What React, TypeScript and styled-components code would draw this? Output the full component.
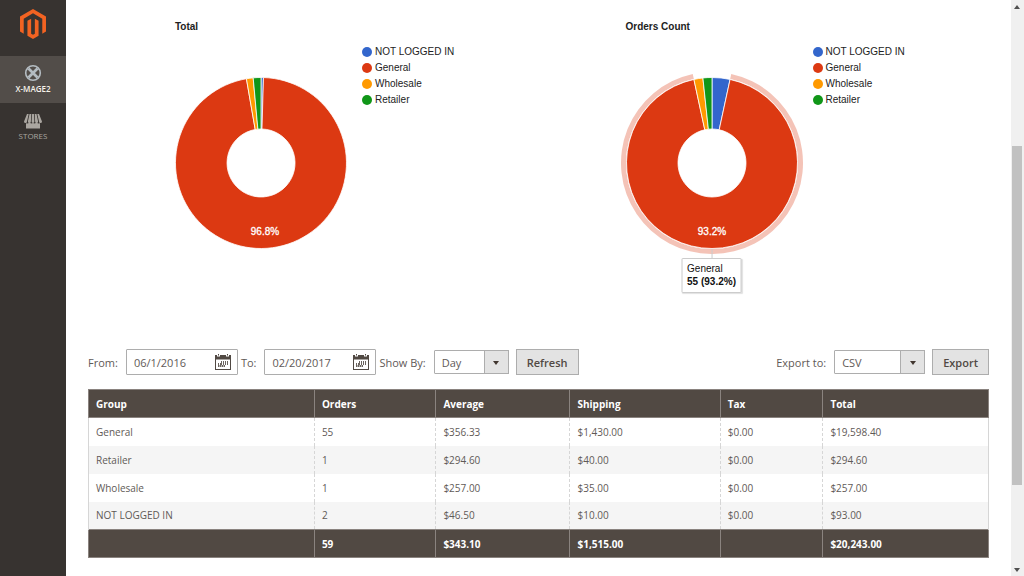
import React from "react";
import styled, { createGlobalStyle } from "styled-components";

const GlobalStyle = createGlobalStyle`
  *, *::before, *::after { box-sizing: border-box; }
  body {
    margin: 0;
    background: #fff;
    color: #5f5a57;
    font-family: "Open Sans", "Noto Sans", sans-serif;
    font-size: 11px;
  }
`;

const Page = styled.div`
  display: grid;
  grid-template-columns: 66px minmax(0, 1fr) 13px;
  min-height: 100vh;
`;

const Sidebar = styled.nav`
  background: #373330;
`;

const LogoLink = styled.a`
  display: flex;
  justify-content: center;
  height: 56px;
  padding-top: 9px;
  color: #f26322;
`;

const MenuList = styled.ul`
  margin: 0;
  padding: 0;
  list-style: none;
`;

const MenuLink = styled.a<{ $active?: boolean }>`
  display: flex;
  flex-direction: column;
  align-items: center;
  gap: 1px;
  height: 47px;
  padding-top: 8px;
  background: ${(p) => (p.$active ? "#524d49" : "transparent")};
  color: ${(p) => (p.$active ? "#f7f3eb" : "#aaa6a0")};
  font-size: 8px;
  line-height: 12px;
  font-weight: ${(p) => (p.$active ? 600 : 400)};
  text-decoration: none;
  text-transform: uppercase;
`;

const Main = styled.main`
  padding: 18px 22px;
`;

const Charts = styled.section`
  display: grid;
  grid-template-columns: 1fr 1fr;
  height: 331px;
  font-family: "Liberation Sans", Arial, sans-serif;
  font-size: 10px;
  color: #222;
`;

const ChartPanel = styled.figure`
  margin: 0;
  padding-left: 82px;
`;

const ChartTitle = styled.figcaption`
  height: 26px;
  padding-left: 5px;
  font-weight: 700;
  line-height: 18px;
`;

const ChartBody = styled.div`
  display: flex;
  gap: 10px;
`;

const DonutBox = styled.div`
  position: relative;
  width: 182px;
  margin-top: 28px;
`;

const DonutSvg = styled.svg`
  display: block;
`;

const Legend = styled.ul`
  margin: 0;
  padding: 0;
  list-style: none;
`;

const LegendItem = styled.li<{ $color: string }>`
  display: flex;
  align-items: center;
  gap: 3px;
  line-height: 16px;

  &::before {
    content: "";
    width: 10px;
    height: 10px;
    border-radius: 50%;
    background: ${(p) => p.$color};
  }
`;

const Tooltip = styled.div`
  position: absolute;
  top: 186px;
  left: 50%;
  transform: translateX(-50%);
  padding: 3px 5px 4px;
  border: 1px solid #ccc;
  border-radius: 1px;
  background: #fff;
  box-shadow: 1px 1px 1px rgba(0, 0, 0, 0.12);
  color: #111;
  line-height: 13px;
  white-space: nowrap;

  &::before {
    content: "";
    position: absolute;
    bottom: 100%;
    left: 50%;
    width: 1px;
    height: 10px;
    background: #ccc;
  }

  strong { display: block; }
`;

const Toolbar = styled.form`
  display: flex;
  align-items: center;
  justify-content: space-between;
  height: 26px;
  margin-bottom: 14px;
`;

const ToolbarGroup = styled.div`
  display: flex;
  align-items: center;
  gap: 7px;
`;

const Filters = styled.div`
  display: flex;
  align-items: center;
  gap: 3px;
`;

const Field = styled.div`
  display: flex;
  align-items: center;
  gap: 8px;
`;

const DateBox = styled.div`
  display: flex;
  align-items: center;
  width: 112px;
  height: 26px;
  padding-right: 6px;
  border: 1px solid #adadad;
  border-radius: 1px;
`;

const DateInput = styled.input`
  flex: 1;
  min-width: 0;
  padding: 0 0 0 7px;
  border: 0;
  background: transparent;
  color: inherit;
  font: inherit;
`;

const IconButton = styled.button`
  display: flex;
  padding: 0;
  border: 0;
  background: transparent;
  color: #514943;
`;

const SelectBox = styled.div<{ $width: number }>`
  display: grid;
  grid-template-columns: 1fr 25px;
  width: ${(p) => p.$width}px;
  height: 24px;
`;

const Select = styled.select`
  grid-area: 1 / 1 / 2 / 3;
  appearance: none;
  padding: 0 25px 0 7px;
  border: 1px solid #adadad;
  border-radius: 1px;
  background: #fff;
  color: inherit;
  font: inherit;
`;

const SelectArrow = styled.span`
  grid-area: 1 / 2;
  display: flex;
  align-items: center;
  justify-content: center;
  padding-top: 2px;
  border: 1px solid #adadad;
  background: #e3e3e3;
  color: #41362f;
  pointer-events: none;
`;

const Button = styled.button`
  height: 26px;
  padding: 0 10px;
  border: 1px solid #adadad;
  border-radius: 0;
  background: #e3e3e3;
  color: #514943;
  font: inherit;
  font-weight: 600;
`;

const ReportTable = styled.table`
  width: 100%;
  table-layout: fixed;
  border-collapse: collapse;
  font-size: 10px;
  line-height: 14px;
  text-align: left;

  th, td { height: 28px; padding: 0 8px 0 7px; }

  thead, tfoot { background: #514943; color: #fff; }
  thead th, tfoot td {
    border: 1px solid #8a837f;
    font-weight: 700;
  }

  tbody td { border: 0 dashed #d6d6d6; border-left-width: 1px; }
  tbody td:first-child { border-left-style: solid; }
  tbody td:last-child { border-right: 1px solid #d6d6d6; }
  tbody tr:nth-child(even) { background: #f5f5f5; }
`;

const Col = styled.col<{ $share?: number }>`
  width: ${(p) => (p.$share ? `${p.$share}%` : "auto")};
`;

const ScrollTrack = styled.div`
  display: flex;
  flex-direction: column;
  height: 100vh;
  padding: 0 2px 0 1px;
  background: #f0f0f0;
`;

const ScrollArrow = styled.span`
  display: flex;
  align-items: center;
  justify-content: center;
  height: 13px;
  color: #505050;
`;

const ScrollSpace = styled.span<{ $grow: number }>`
  flex: ${(p) => p.$grow} 0 0;
`;

const ScrollThumb = styled(ScrollSpace)`
  background: #c1c1c1;
`;

const slices = [
  { name: "NOT LOGGED IN", color: "#3366cc" },
  { name: "General", color: "#dc3912" },
  { name: "Wholesale", color: "#ff9900" },
  { name: "Retailer", color: "#109618" },
];

const CENTER = 91;

function ring(start: number, end: number, inner: number, outer: number) {
  const at = (f: number, r: number) => {
    const a = f * 2 * Math.PI;
    return `${(CENTER + r * Math.sin(a)).toFixed(2)} ${(CENTER - r * Math.cos(a)).toFixed(2)}`;
  };
  const large = end - start > 0.5 ? 1 : 0;
  return `M${at(start, inner)}L${at(start, outer)}A${outer} ${outer} 0 ${large} 1 ${at(end, outer)}L${at(end, inner)}A${inner} ${inner} 0 ${large} 0 ${at(start, inner)}Z`;
}

type DonutProps = {
  title: string;
  values: number[];
  label: string;
  labelX: number;
  selected?: number;
  tip?: string;
};

function DonutChart({ title, values, label, labelX, selected, tip }: DonutProps) {
  const total = values.reduce((a, b) => a + b, 0);
  let sum = 0;
  const arcs = values.map((v) => {
    const start = sum / total;
    sum += v;
    return { start, end: sum / total };
  });
  return (
    <ChartPanel>
      <ChartTitle>{title}</ChartTitle>
      <ChartBody>
        <DonutBox>
          <DonutSvg width="182" height="182" viewBox="0 0 182 182" role="img" aria-label={`${title}: General ${label}`}>
            {selected !== undefined && (
              <path d={ring(arcs[selected].start, arcs[selected].end, 86, 91)} fill={slices[selected].color} fillOpacity="0.3" />
            )}
            {arcs.map((a, i) => (
              <path key={slices[i].name} d={ring(a.start, a.end, 34, 85.5)} fill={slices[i].color} stroke="#fff" strokeWidth="0.8" />
            ))}
            <text x={labelX} y="163" textAnchor="middle" fill="#fff" stroke="#fff" strokeWidth="0.3">{label}</text>
          </DonutSvg>
          {tip && selected !== undefined && (
            <Tooltip role="tooltip">
              {slices[selected].name}
              <strong>{tip}</strong>
            </Tooltip>
          )}
        </DonutBox>
        <Legend>
          {slices.map((s) => (
            <LegendItem key={s.name} $color={s.color}>{s.name}</LegendItem>
          ))}
        </Legend>
      </ChartBody>
    </ChartPanel>
  );
}

function CalendarIcon() {
  return (
    <svg width="16" height="16" viewBox="0 0 16 16" fill="currentColor" aria-hidden="true">
      <path fillRule="evenodd" d="M0 1h2v1.500h3V1h6v1.500h3V1h2v15H0zM1 5.500V15h14V5.500z" />
      <path d="M3 0h1v1.500H3zM12 0h1v1.500h-1z" />
      <path d="M6 7h1v2H6zM8 7h1v2H8zM10 7h1v2h-1zM12 7h1v2h-1zM3 9h1v2H3zM5 9h2v2H5zM8 9h1v2H8zM10 9h1v2h-1zM12 9h1v2h-1zM3 11h1.500v2H3zM5 11h1.500v2H5zM7 11h1.500v2H7zM9 11h1v2H9z" fillOpacity="0.850" />
    </svg>
  );
}

function DateField({ id, label, value }: { id: string; label: string; value: string }) {
  return (
    <Field>
      <label htmlFor={id}>{label}</label>
      <DateBox>
        <DateInput id={id} type="text" defaultValue={value} />
        <IconButton type="button" aria-label={`Pick date (${label})`}><CalendarIcon /></IconButton>
      </DateBox>
    </Field>
  );
}

function SelectField({ id, label, width, options }: { id: string; label: string; width: number; options: string[] }) {
  return (
    <Field>
      <label htmlFor={id}>{label}</label>
      <SelectBox $width={width}>
        <Select id={id}>
          {options.map((o) => <option key={o}>{o}</option>)}
        </Select>
        <SelectArrow>
          <svg width="6" height="4" viewBox="0 0 6 4" fill="currentColor" aria-hidden="true"><path d="M0 0h6L3 4z" /></svg>
        </SelectArrow>
      </SelectBox>
    </Field>
  );
}

const headings = ["Group", "Orders", "Average", "Shipping", "Tax", "Total"];
const shares = [25.1, 13.5, 14.9, 16.7, 11.4, 0];
const rows = [
  ["General", "55", "$356.33", "$1,430.00", "$0.00", "$19,598.40"],
  ["Retailer", "1", "$294.60", "$40.00", "$0.00", "$294.60"],
  ["Wholesale", "1", "$257.00", "$35.00", "$0.00", "$257.00"],
  ["NOT LOGGED IN", "2", "$46.50", "$10.00", "$0.00", "$93.00"],
];
const totals = ["", "59", "$343.10", "$1,515.00", "", "$20,243.00"];

export default function App() {
  return (
    <>
      <GlobalStyle />
      <Page>
        <Sidebar aria-label="Admin">
          <LogoLink href="#" aria-label="Magento">
            <svg width="30" height="30" viewBox="0 0 24 24" fill="currentColor" aria-hidden="true">
              <path d="M12 24l-4.455-2.572v-12l2.970-1.715v12.001l1.485.902 1.485-.902V7.713l2.971 1.715v12L12 24zM22.391 6v12l-2.969 1.714V7.713L12 3.430 4.574 7.713v12.001L1.609 18V6L12 0l10.391 6z" />
            </svg>
          </LogoLink>
          <MenuList>
            <li>
              <MenuLink href="#" $active>
                <svg width="18" height="18" viewBox="0 0 18 18" fill="none" stroke="#b4bcc2" aria-hidden="true">
                  <circle cx="9" cy="9" r="7.300" strokeWidth="1.600" />
                  <path d="M4.500 4.500l9 9M13.500 4.500l-9 9" strokeWidth="2.800" />
                </svg>
                X-Mage2
              </MenuLink>
            </li>
            <li>
              <MenuLink href="#">
                <svg width="18" height="18" viewBox="0 0 18 18" fill="currentColor" aria-hidden="true">
                  <path d="M3 3h1.700L3 10.500a1.500 1.500 0 0 1-3 0zM5.500 3h1.800l-.4 7.500a1.500 1.500 0 0 1-3 0zM8.100 3h1.800l.5 7.500a1.400 1.400 0 0 1-2.800 0zM10.700 3h1.800l1.600 7.500a1.500 1.500 0 0 1-3 0zM13.300 3H15l3 7.500a1.500 1.500 0 0 1-3 0z" />
                  <path d="M2 12.300l1.500.3 2-.8 2 .8 1.500-.6 1.500.6 2-.8 2 .8 1.500-.3V17.500H2z" />
                </svg>
                Stores
              </MenuLink>
            </li>
          </MenuList>
        </Sidebar>
        <Main>
          <Charts>
            <DonutChart title="Total" values={[93, 19598.4, 257, 294.6]} label="96.8%" labelX={95} />
            <DonutChart title="Orders Count" values={[2, 55, 1, 1]} label="93.2%" labelX={91} selected={1} tip="55 (93.2%)" />
          </Charts>
          <Toolbar>
            <ToolbarGroup>
              <Filters>
                <DateField id="from" label="From:" value="06/1/2016" />
                <DateField id="to" label="To:" value="02/20/2017" />
                <SelectField id="period" label="Show By:" width={75} options={["Day", "Month", "Year"]} />
              </Filters>
              <Button type="button">Refresh</Button>
            </ToolbarGroup>
            <ToolbarGroup>
              <SelectField id="format" label="Export to:" width={91} options={["CSV", "Excel XML"]} />
              <Button type="button">Export</Button>
            </ToolbarGroup>
          </Toolbar>
          <ReportTable>
            <colgroup>
              {shares.map((s, i) => <Col key={headings[i]} $share={s} />)}
            </colgroup>
            <thead>
              <tr>{headings.map((h) => <th key={h} scope="col">{h}</th>)}</tr>
            </thead>
            <tbody>
              {rows.map((r) => (
                <tr key={r[0]}>{r.map((c, i) => <td key={headings[i]}>{c}</td>)}</tr>
              ))}
            </tbody>
            <tfoot>
              <tr>{totals.map((t, i) => <td key={headings[i]}>{t}</td>)}</tr>
            </tfoot>
          </ReportTable>
        </Main>
        <ScrollTrack aria-hidden="true">
          <ScrollArrow><svg width="6" height="4" viewBox="0 0 6 4" fill="currentColor"><path d="M0 4h6L3 0z" /></svg></ScrollArrow>
          <ScrollSpace $grow={133} />
          <ScrollThumb $grow={339} />
          <ScrollSpace $grow={78} />
          <ScrollArrow><svg width="6" height="4" viewBox="0 0 6 4" fill="currentColor"><path d="M0 0h6L3 4z" /></svg></ScrollArrow>
        </ScrollTrack>
      </Page>
    </>
  );
}
